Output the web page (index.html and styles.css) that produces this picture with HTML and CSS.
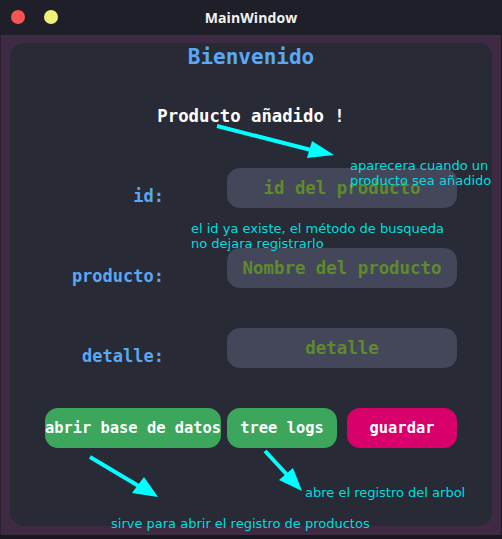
FILE: index.html
```html
<!DOCTYPE html>
<html lang="es">
<head>
<meta charset="utf-8">
<title>MainWindow</title>
<link rel="stylesheet" href="styles.css">
</head>
<body>
<div class="window">
  <header class="titlebar">
    <div class="lights">
      <span class="light light-red"></span>
      <span class="light light-yellow"></span>
    </div>
    <div class="title-text">MainWindow</div>
  </header>
  <div class="frame">
    <main class="panel">
      <h1 class="welcome">Bienvenido</h1>
      <p class="message">Producto añadido !</p>
      <div class="form">
        <div class="row">
          <label class="label">id:</label>
          <div class="field">id del producto</div>
        </div>
        <div class="row">
          <label class="label">producto:</label>
          <div class="field">Nombre del producto</div>
        </div>
        <div class="row">
          <label class="label">detalle:</label>
          <div class="field">detalle</div>
        </div>
      </div>
      <div class="buttons">
        <button class="btn btn-green btn-db">abrir base de datos</button>
        <button class="btn btn-green btn-tree">tree logs</button>
        <button class="btn btn-pink btn-save">guardar</button>
      </div>
    </main>
  </div>

  <svg class="arrows" width="502" height="539" viewBox="0 0 502 539">
    <g stroke="#00ffff" stroke-width="4" fill="none">
      <line x1="217" y1="126" x2="315" y2="151"/>
      <line x1="90" y1="457" x2="142" y2="488"/>
      <line x1="265" y1="451" x2="291" y2="479"/>
    </g>
    <g fill="#00ffff">
      <polygon points="334,155 307,158 312,141"/>
      <polygon points="158,497 132,493 144,477"/>
      <polygon points="302,491 279,480 293,468"/>
    </g>
  </svg>

  <div class="note note-added">aparecera cuando un<br>producto sea añadido</div>
  <div class="note note-id">el id ya existe, el método de busqueda<br>no dejara registrarlo</div>
  <div class="note note-tree">abre el registro del arbol</div>
  <div class="note note-db">sirve para abrir el registro de productos</div>
</div>
</body>
</html>
```

FILE: styles.css
```css
* { box-sizing: border-box; }

html, body {
  margin: 0;
  padding: 0;
  background: #17181e;
}

.window {
  position: relative;
  width: 502px;
  height: 539px;
  background: #17181e;
  overflow: hidden;
}

.titlebar {
  position: relative;
  height: 35px;
  background: #1e1f29;
  display: flex;
  align-items: center;
  justify-content: center;
}

.lights {
  position: absolute;
  left: 11px;
  top: 10px;
  display: flex;
  gap: 19px;
}

.light {
  width: 14px;
  height: 14px;
  border-radius: 50%;
  display: block;
}

.light-red { background: #f65552; }
.light-yellow { background: #eef07a; }

.title-text {
  color: #f2f2f2;
  font-family: "Open Sans", "DejaVu Sans", sans-serif;
  font-weight: 700;
  font-size: 14px;
  letter-spacing: 0.1px;
}

.frame {
  height: 500px;
  background: #3e2a42;
  border-left: 1px solid #2c2130;
  border-right: 1px solid #1c1a22;
  padding: 8px 9px 9px 9px;
}

.panel {
  height: 483px;
  background: #282a36;
  border-radius: 14px;
  padding-top: 0;
}

.welcome {
  margin: 0;
  height: 28px;
  line-height: 28px;
  text-align: center;
  font-family: "DejaVu Sans Mono", monospace;
  font-weight: 700;
  font-size: 21px;
  color: #5aa8f4;
}

.message {
  margin: 33px 0 0 0;
  height: 24px;
  line-height: 24px;
  text-align: center;
  font-family: "DejaVu Sans Mono", monospace;
  font-weight: 700;
  font-size: 17.3px;
  color: #ffffff;
}

.form {
  margin-top: 40px;
  display: flex;
  flex-direction: column;
  gap: 40px;
}

.row {
  display: flex;
  align-items: flex-start;
  height: 40px;
}

.label {
  width: 154px;
  padding-top: 8px;
  line-height: 40px;
  text-align: right;
  font-family: "DejaVu Sans Mono", monospace;
  font-weight: 700;
  font-size: 17px;
  color: #5aa8f4;
}

.field {
  margin-left: 63px;
  width: 230px;
  height: 40px;
  line-height: 40px;
  background: #44475a;
  border-radius: 13px;
  text-align: center;
  font-family: "DejaVu Sans Mono", monospace;
  font-weight: 700;
  font-size: 17.4px;
  color: #5f8a2b;
  white-space: nowrap;
}

.buttons {
  margin-top: 40px;
  padding-left: 35px;
  display: flex;
  align-items: flex-start;
}

.btn {
  height: 40px;
  border: none;
  border-radius: 13px;
  padding: 0;
  font-family: "DejaVu Sans Mono", monospace;
  font-weight: 700;
  font-size: 15.4px;
  color: #ffffff;
  white-space: nowrap;
  overflow: visible;
  display: flex;
  align-items: center;
  justify-content: center;
}

.btn-green { background: #3ca65d; }
.btn-pink { background: #d8006a; }

.btn-db { width: 176px; }
.btn-tree { width: 110px; margin-left: 6px; }
.btn-save { width: 110px; margin-left: 10px; }

.arrows {
  position: absolute;
  left: 0;
  top: 0;
  pointer-events: none;
}

.note {
  position: absolute;
  font-family: "DejaVu Sans", sans-serif;
  font-size: 13px;
  line-height: 15px;
  color: #00dede;
  white-space: nowrap;
}

.note-added { left: 350px; top: 158px; }
.note-id { left: 191px; top: 221px; }
.note-tree { left: 305px; top: 485px; }
.note-db { left: 111px; top: 516px; }
```
